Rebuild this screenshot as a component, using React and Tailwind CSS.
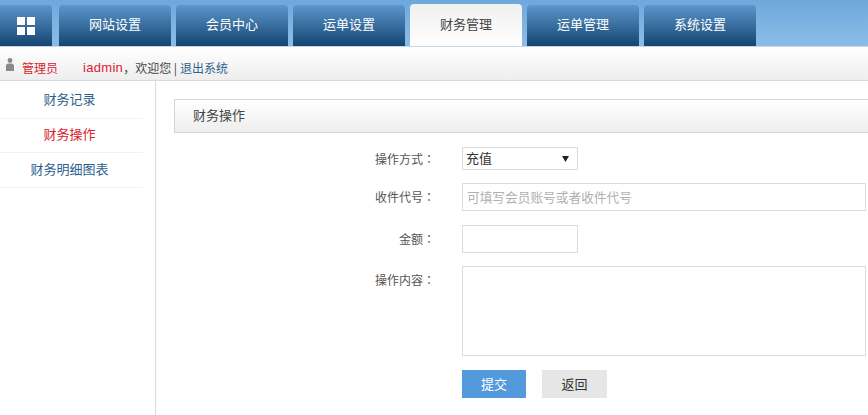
import React from 'react';

const FONT = "font-['Microsoft_YaHei','Noto_Sans_CJK_SC','Liberation_Sans',sans-serif]";

const tabs = ['网站设置', '会员中心', '运单设置', '财务管理', '运单管理', '系统设置'];
const sideItems = [
  { label: '财务记录', cls: 'h-[38px] pb-[2px] text-[#2f5f8f]' },
  { label: '财务操作', cls: 'h-[34px] pb-[3px] text-[#d9232e]' },
  { label: '财务明细图表', cls: 'h-[35px] pb-[2px] text-[#2f5f8f]' },
];

const Label = ({ children, className = '' }) => (
  <div className={`w-[306px] shrink-0 pr-[27px] text-right text-[12px] text-[#555] ${className}`}>
    {children}
    <span className="font-['Noto_Sans_CJK_TC']">：</span>
  </div>
);

const App = () => {
  return (
    <div className={`h-[415px] w-[868px] overflow-hidden bg-white ${FONT}`}>
      {/* Top nav */}
      <div className="flex h-[47px] gap-[5px] border-b border-[#c5d6e6] bg-gradient-to-b from-[#6ea8dc] to-[#8cbde6] pt-[5px]">
        <div className="mr-[2px] flex w-[52px] items-center justify-center rounded-tr-[4px] bg-gradient-to-b from-[#5d97cc] to-[#144673]">
          <svg width="18" height="18" viewBox="0 0 18 18" fill="#fff">
            <rect x="0" y="0" width="8" height="8" />
            <rect x="10" y="0" width="8" height="8" />
            <rect x="0" y="10" width="8" height="8" />
            <rect x="10" y="10" width="8" height="8" />
          </svg>
        </div>
        {tabs.map((t) =>
          t === '财务管理' ? (
            <div key={t} className="-mt-[1px] flex h-[42px] w-[112px] items-center justify-center rounded-t-[4px] bg-gradient-to-b from-[#f0f0f0] to-white pb-[3px] text-[13px] text-[#444]">
              {t}
            </div>
          ) : (
            <div key={t} className="flex w-[112px] items-center justify-center rounded-t-[4px] bg-gradient-to-b from-[#5d97cc] to-[#144673] pb-[3px] text-[13px] text-white">
              {t}
            </div>
          )
        )}
      </div>

      {/* User bar */}
      <div className="flex h-[34px] items-center border-b border-[#d9d9d9] bg-gradient-to-b from-white to-[#eeeeee] pl-[6px] pt-[9px] text-[12px]">
        <svg className="-mt-[7px]" width="8" height="13" viewBox="0 0 8 13" fill="#8a8a8a">
          <circle cx="4" cy="2.5" r="2.4" />
          <path d="M0 13V7.5A2.5 2.5 0 0 1 2.5 5.5h3A2.5 2.5 0 0 1 8 7.5V13z" />
        </svg>
        <span className="ml-[8px] text-[#d9232e]">管理员</span>
        <span className="ml-[25px] font-['Liberation_Sans'] text-[13px] tracking-[0.3px] text-[#d9232e]">iadmin</span>
        <span className="text-[#444]">，欢迎您 |</span>
        <span className="ml-[3px] text-[#2f5f8f]">退出系统</span>
      </div>

      <div className="flex h-[334px]">
        {/* Sidebar */}
        <div className="w-[156px] shrink-0 border-r border-[#d9d9d9] pr-[12px]">
          {sideItems.map((it) => (
            <div key={it.label} className={`flex items-center justify-center border-b border-[#f2f2f2] pr-[4px] text-[13px] ${it.cls}`}>
              {it.label}
            </div>
          ))}
        </div>

        {/* Main */}
        <div className="min-w-0 flex-1 pl-[18px] pt-[18px]">
          <div className="flex h-[34px] w-[720px] items-center border border-[#d5d5d5] bg-gradient-to-b from-white to-[#eeeeee] pb-[2px] pl-[18px] text-[13px] text-[#444]">
            财务操作
          </div>

          <div className="-ml-[18px] pt-[14px]">
            <div className="flex h-[23px] items-center">
              <Label>操作方式</Label>
              <div className="flex h-[23px] w-[116px] items-center justify-between border border-[#dcdcdc] pb-[2px] pl-[3px] pr-[8px] text-[13px] text-[#333]">
                充值
                <svg className="mt-[2px]" width="7" height="7" viewBox="0 0 7 7" fill="#222"><path d="M0 1h7L3.5 7z" /></svg>
              </div>
            </div>
            <div className="mt-[13px] flex h-[28px] items-center">
              <Label>收件代号</Label>
              <div className="flex h-[28px] w-[404px] items-center border border-[#dcdcdc] pl-[4px] text-[12.7px] text-[#b0b0b0]">
                可填写会员账号或者收件代号
              </div>
            </div>
            <div className="mt-[14px] flex h-[28px] items-center">
              <Label>金额</Label>
              <div className="h-[28px] w-[116px] border border-[#dcdcdc]" />
            </div>
            <div className="mt-[13px] flex">
              <Label className="pt-[5px]">操作内容</Label>
              <div className="h-[90px] w-[404px] border border-[#dcdcdc]" />
            </div>
            <div className="mt-[14px] flex gap-[16px] pl-[306px]">
              <div className="flex h-[28px] w-[64px] items-center justify-center bg-[#5599dd] text-[13px] text-white">提交</div>
              <div className="flex h-[28px] w-[65px] items-center justify-center bg-[#e6e6e6] text-[13px] text-[#333]">返回</div>
            </div>
          </div>
        </div>
      </div>
    </div>
  );
};

export default App;
